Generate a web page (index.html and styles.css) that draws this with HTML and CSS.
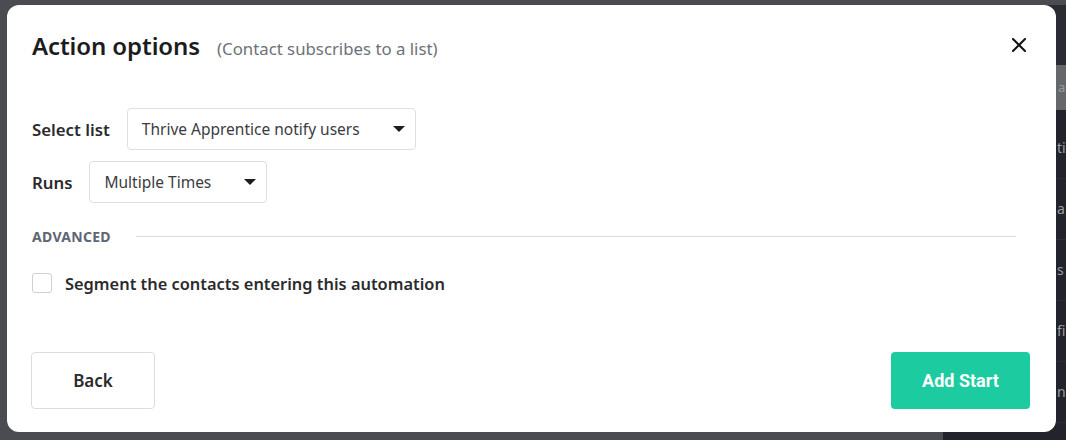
FILE: index.html
```html
<!DOCTYPE html>
<html lang="en">
<head>
<meta charset="utf-8">
<title>Action options</title>
<link rel="stylesheet" href="styles.css">
</head>
<body>
<div class="page">
  <main class="backdrop"></main>
  <aside class="sidebar">
    <div class="side-top"></div>
    <div class="side-search">a</div>
    <div class="side-row">ti</div>
    <div class="side-row">a</div>
    <div class="side-row">s</div>
    <div class="side-row">fi</div>
    <div class="side-row">n</div>
  </aside>
</div>

<div class="modal" role="dialog" aria-labelledby="modal-title">
  <header class="modal-head">
    <div class="titles">
      <h1 id="modal-title" class="title">Action options</h1>
      <span class="subtitle">(Contact subscribes to a list)</span>
    </div>
    <button class="close" aria-label="Close">
      <svg width="14" height="14" viewBox="0 0 14 14"><path d="M1 1L13 13M13 1L1 13" stroke="#111" stroke-width="2" stroke-linecap="square" fill="none"/></svg>
    </button>
  </header>

  <div class="field field-first">
    <label class="label">Select list</label>
    <div class="select select-list">
      <span>Thrive Apprentice notify users</span>
      <span class="caret"></span>
    </div>
  </div>

  <div class="field field-second">
    <label class="label">Runs</label>
    <div class="select select-runs">
      <span>Multiple Times</span>
      <span class="caret"></span>
    </div>
  </div>

  <div class="advanced">
    <span class="adv-label">ADVANCED</span>
    <span class="adv-line"></span>
  </div>

  <label class="check-row">
    <span class="checkbox"></span>
    <span class="check-label">Segment the contacts entering this automation</span>
  </label>

  <footer class="modal-foot">
    <button class="btn btn-back">Back</button>
    <button class="btn btn-primary">Add Start</button>
  </footer>
</div>
</body>
</html>
```

FILE: styles.css
```css
* { box-sizing: border-box; }

html, body {
  margin: 0;
  padding: 0;
  width: 1066px;
  height: 440px;
  overflow: hidden;
}

body {
  font-family: "Noto Sans", "Liberation Sans", sans-serif;
  background: #4b4c51;
  position: relative;
}

.page {
  display: grid;
  grid-template-columns: 943px 123px;
  height: 440px;
}

.backdrop {
  background: #4b4c51;
}

.sidebar {
  background: #22232b;
  display: flex;
  flex-direction: column;
}

.side-top {
  height: 65px;
  background: #2a2b33;
  border-top: 5px solid #4b4c51;
}

.side-search {
  height: 45px;
  background: #66676b;
  color: #9a9a9e;
  font-size: 13px;
  line-height: 45px;
  padding-left: 115px;
  margin-bottom: 8px;
}

.side-row {
  height: 61px;
  border-bottom: 1px solid #2c2d35;
  color: #9c9da2;
  font-size: 14px;
  line-height: 60px;
  padding-left: 114px;
  white-space: nowrap;
}

.modal {
  position: absolute;
  left: 7px;
  top: 5px;
  width: 1049px;
  height: 427px;
  background: #fff;
  border-radius: 12px;
  padding: 0 26px 0 25px;
  display: flex;
  flex-direction: column;
}

.modal-head {
  display: flex;
  justify-content: space-between;
  align-items: center;
  height: 32px;
  margin-top: 24px;
}

.titles {
  display: flex;
  align-items: baseline;
  gap: 17px;
}

.title {
  margin: 0;
  font-size: 24px;
  font-weight: 600;
  color: #1c1c1e;
  letter-spacing: -0.1px;
}

.subtitle {
  font-size: 16.8px;
  color: #6e7178;
}

.close {
  width: 22px;
  height: 22px;
  padding: 0;
  border: 0;
  background: none;
  display: flex;
  align-items: center;
  justify-content: center;
  cursor: pointer;
}

.field {
  display: flex;
  align-items: center;
  gap: 17px;
  height: 42px;
}

.field-first { margin-top: 47px; }
.field-second { margin-top: 11px; }

.label {
  font-size: 16.8px;
  font-weight: 600;
  color: #2a2a2c;
}

.select {
  height: 42px;
  border: 1px solid #dedfe1;
  border-radius: 4px;
  display: flex;
  align-items: center;
  justify-content: space-between;
  padding: 0 10px 0 14px;
  font-size: 15.5px;
  color: #3b3c3f;
}

.select-list { width: 289px; }
.select-runs { width: 178px; }

.caret {
  width: 0;
  height: 0;
  border-left: 6px solid transparent;
  border-right: 6px solid transparent;
  border-top: 6px solid #1d1d1f;
}

.advanced {
  display: flex;
  align-items: center;
  gap: 25px;
  height: 20px;
  margin-top: 23px;
  margin-right: 14px;
}

.adv-label {
  font-size: 14px;
  font-weight: 700;
  color: #5e6573;
  letter-spacing: 0.3px;
}

.adv-line {
  flex: 1;
  height: 1px;
  background: #dcdde0;
}

.check-row {
  display: flex;
  align-items: center;
  gap: 13px;
  height: 20px;
  margin-top: 27px;
}

.checkbox {
  width: 20px;
  height: 20px;
  border: 1px solid #cfd0d3;
  border-radius: 3px;
  background: #fff;
}

.check-label {
  font-size: 16.4px;
  font-weight: 600;
  color: #2b2b2d;
}

.modal-foot {
  display: flex;
  justify-content: space-between;
  margin-top: 59px;
}

.btn {
  height: 57px;
  border-radius: 4px;
  cursor: pointer;
}

.btn-back {
  width: 124px;
  margin-left: -1px;
  background: #fff;
  border: 1px solid #dcdde0;
  color: #2b2b2d;
  font-family: "Noto Sans", "Liberation Sans", sans-serif;
  font-size: 17px;
  font-weight: 600;
}

.btn-primary {
  width: 139px;
  background: #1ccba0;
  border: 0;
  color: #fff;
  font-family: Roboto, "Liberation Sans", sans-serif;
  font-size: 18px;
  font-weight: 700;
}
```
